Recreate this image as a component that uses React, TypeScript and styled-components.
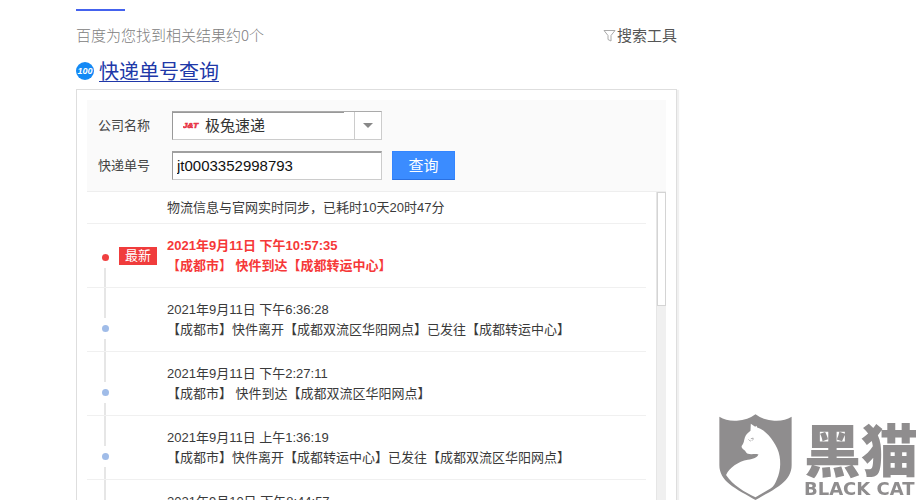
import React from "react";
import styled, { createGlobalStyle } from "styled-components";

const sans = `"Liberation Sans", "Noto Sans CJK SC", sans-serif`;
const cjk = `"Noto Sans CJK SC", sans-serif`;

const GlobalStyle = createGlobalStyle`
  *, *::before, *::after { box-sizing: border-box; }
  body { margin: 0; background: #fff; color: #3a3a3a; font: 13px/20px ${sans}; }
  h1, ul, p { margin: 0; padding: 0; }
`;

const Page = styled.main`
  height: 100vh;
  overflow: hidden;
  padding: 9px 243px 0 76px;
`;

const TabIndicator = styled.div`
  width: 49px;
  height: 2px;
  background: #4462ee;
`;

const ResultBar = styled.div`
  display: flex;
  justify-content: space-between;
  align-items: center;
  height: 24px;
  margin-top: 12px;
  font: 300 15px/24px ${cjk};
  color: #808080;
`;

const ToolButton = styled.button`
  display: flex;
  align-items: center;
  gap: 1px;
  padding: 0;
  border: 0;
  background: none;
  color: #555;
  font: 400 15px/24px ${cjk};
`;

const Title = styled.h1`
  display: flex;
  align-items: center;
  gap: 5px;
  height: 28px;
  margin: 10px 0 4px;
  font: 400 20px/28px ${cjk};
`;

const TitleLink = styled.a`
  color: #2038a8;
  text-decoration: underline;
  text-decoration-thickness: 1px;
  text-underline-offset: 2px;
`;

const Card = styled.section`
  padding: 10px;
  border: 1px solid #dedede;
  box-shadow: 2px 1px 1px #f0f0f0;
`;

const QueryForm = styled.form`
  display: flex;
  flex-direction: column;
  gap: 11px;
  padding: 11px;
  border-bottom: 1px solid #eee;
  background: #fafafa;
`;

const FieldRow = styled.div`
  display: flex;
  align-items: center;
  height: 29px;
`;

const Label = styled.label`
  width: 74px;
  color: #444;
`;

const SelectBox = styled.div`
  position: relative;
  width: 210px;
  height: 29px;
  border: 1px solid #ccc;
  border-top-color: #aaa;
  border-left-color: #999;
  background: #fff;
`;

const CompanySelect = styled.select`
  appearance: none;
  display: block;
  width: 171px;
  height: 27px;
  padding: 0 0 2px 32px;
  border: 0;
  border-top: 1px solid #999;
  border-radius: 0;
  background: transparent;
  color: #333;
  font: 400 15px/24px ${cjk};
`;

const CarrierLogo = styled.svg`
  position: absolute;
  left: 10px;
  top: 8px;
`;

const SelectArrow = styled.span`
  position: absolute;
  right: 0;
  top: 0;
  bottom: 0;
  display: grid;
  place-items: center;
  width: 27px;
  border-left: 1px solid #ccc;
  pointer-events: none;
`;

const NumberInput = styled.input`
  width: 210px;
  height: 29px;
  padding: 0 4px 2px;
  border: 1px solid #ccc;
  border-top: 2px solid #a0a0a0;
  border-left-color: #999;
  border-radius: 0;
  background: #fff;
  color: #111;
  font: 15px/24px ${sans};
`;

const SubmitButton = styled.button`
  width: 63px;
  height: 29px;
  margin-left: 10px;
  padding: 0 0 2px;
  border: 1px solid #3385ff;
  border-bottom-color: #2a70e0;
  background: #3b8cff;
  color: #fff;
  font: 400 15px/24px ${cjk};
`;

const TrackArea = styled.div`
  display: flex;
  gap: 10px;
`;

const TrackContent = styled.div`
  flex: 1;
  min-width: 0;
`;

const Summary = styled.p`
  height: 32px;
  padding-left: 80px;
  border-bottom: 1px solid #f0f0f0;
  line-height: 32px;
`;

const TrackList = styled.ul`
  list-style: none;
`;

const TrackItem = styled.li<{ $latest?: boolean }>`
  display: grid;
  grid-template-columns: 8px 38px 1fr;
  height: 64px;
  padding-left: 14px;
  border-bottom: 1px solid #f0f0f0;
  color: ${(p) => (p.$latest ? "#f63838" : "#3a3a3a")};
  font-weight: ${(p) => (p.$latest ? 700 : 400)};
  column-gap: 10px;
`;

const Rail = styled.div`
  display: flex;
  flex-direction: column;
  align-items: center;
`;

const RailTop = styled.span<{ $latest?: boolean }>`
  width: 2px;
  height: ${(p) => (p.$latest ? 23 : 30)}px;
  background: ${(p) => (p.$latest ? "transparent" : "#e6e6e6")};
`;

const RailBottom = styled.span`
  flex: 1;
  width: 2px;
  background: #e6e6e6;
`;

const Dot = styled.span<{ $latest?: boolean }>`
  width: 7px;
  height: 7px;
  margin: 7px 0;
  border-radius: 50%;
  background: ${(p) => (p.$latest ? "#f04040" : "#a0bce8")};
`;

const Badge = styled.span`
  height: 18px;
  margin-top: 23px;
  background: #f03c3c;
  color: #fff;
  font-weight: 400;
  line-height: 18px;
  text-align: center;
`;

const TrackText = styled.div`
  grid-column: 3;
  padding-top: 12px;
  white-space: nowrap;
`;

const ScrollTrack = styled.div`
  width: 10px;
  border-left: 1px solid #e6e6e6;
  background: #f0f0f0;
`;

const ScrollThumb = styled.div`
  height: 114px;
  border: 1px solid #d4d4d4;
  background: #fff;
`;

const Watermark = styled.aside`
  position: fixed;
  right: 2px;
  bottom: 0;
  display: flex;
  align-items: flex-end;
  gap: 12px;
  color: #8f8d8e;
`;

const Wordmark = styled.div`
  display: flex;
  flex-direction: column;
  width: 114px;
`;

const ChineseName = styled.span`
  font: 900 57px/62px ${cjk};
  white-space: nowrap;
`;

const EnglishName = styled.span`
  font: 700 18px/22px "DejaVu Sans", sans-serif;
  white-space: nowrap;
`;

const entries = [
  { time: "2021年9月11日 下午10:57:35", text: "【成都市】 快件到达【成都转运中心】", latest: true },
  { time: "2021年9月11日 下午6:36:28", text: "【成都市】快件离开【成都双流区华阳网点】已发往【成都转运中心】" },
  { time: "2021年9月11日 下午2:27:11", text: "【成都市】 快件到达【成都双流区华阳网点】" },
  { time: "2021年9月11日 上午1:36:19", text: "【成都市】快件离开【成都转运中心】已发往【成都双流区华阳网点】" },
  { time: "2021年9月10日 下午8:44:57", text: "" },
];

function CatShield() {
  return (
    <svg width="73" height="86" viewBox="29 27 218 257" aria-hidden="true">
      <path
        fill="currentColor"
        d="M30 35Q52 49 82 47Q116 45 138 28Q160 45 194 47Q224 49 246 35V180C246 202 235 221 216 236C194 254 163 269 138 284C113 269 82 254 60 236C41 221 30 202 30 180Z"
      />
      <path
        fill="#fff"
        d="M124 56L137 65L141 62L143 67C169 75 190 102 203 130C216 160 214 197 202 222C197 235 192 243 184 249L138 276C105 260 71 240 50 209C60 188 86 169 115 164C132 161 143 157 147 148C137 145 123 149 113 145C108 142 110 138 103 134C98 130 95 126 97 122C104 113 103 108 106 98C109 89 114 84 123 77Z"
      />
      <path fill="none" stroke="currentColor" strokeWidth="2" d="M117 103Q120 107 124 108M124 101L131 99Q132 104 127 107" />
    </svg>
  );
}

export default function App() {
  return (
    <>
      <GlobalStyle />
      <Page>
        <TabIndicator />
        <ResultBar>
          <span>百度为您找到相关结果约0个</span>
          <ToolButton type="button">
            <svg width="13" height="13" viewBox="0 0 13 13" fill="none" stroke="#aaa" aria-hidden="true">
              <path d="M1 1.5H12L8 6.5V12M1 1.5L5 6.5V10.5L8 12" />
            </svg>
            搜索工具
          </ToolButton>
        </ResultBar>
        <Title>
          <svg width="18" height="18" viewBox="0 0 18 18" aria-hidden="true">
            <circle cx="9" cy="9" r="9" fill="#1489f5" />
            <text x="9" y="12" textAnchor="middle" fill="#fff" fontFamily="Liberation Sans" fontSize="9" fontWeight="700" fontStyle="italic">100</text>
          </svg>
          <TitleLink href="#">快递单号查询</TitleLink>
        </Title>
        <Card>
          <QueryForm onSubmit={(e) => e.preventDefault()}>
            <FieldRow>
              <Label htmlFor="company">公司名称</Label>
              <SelectBox>
                <CompanySelect id="company">
                  <option>极兔速递</option>
                </CompanySelect>
                <CarrierLogo width="17" height="10" viewBox="0 0 17 10" aria-hidden="true">
                  <text x="0" y="8" fill="#e83345" stroke="#e83345" strokeWidth="0.6" fontFamily="Liberation Sans" fontSize="8" fontWeight="700" fontStyle="italic">J&amp;T</text>
                </CarrierLogo>
                <SelectArrow>
                  <svg width="10" height="5" viewBox="0 0 10 5" aria-hidden="true">
                    <path d="M0 0H10L5 5Z" fill="#888" />
                  </svg>
                </SelectArrow>
              </SelectBox>
            </FieldRow>
            <FieldRow>
              <Label htmlFor="number">快递单号</Label>
              <NumberInput id="number" type="text" defaultValue="jt0003352998793" />
              <SubmitButton type="submit">查询</SubmitButton>
            </FieldRow>
          </QueryForm>
          <TrackArea>
            <TrackContent>
              <Summary>物流信息与官网实时同步，已耗时10天20时47分</Summary>
              <TrackList>
                {entries.map((entry) => (
                  <TrackItem key={entry.time} $latest={entry.latest}>
                    <Rail>
                      <RailTop $latest={entry.latest} />
                      <Dot $latest={entry.latest} />
                      <RailBottom />
                    </Rail>
                    {entry.latest && <Badge>最新</Badge>}
                    <TrackText>
                      <p>{entry.time}</p>
                      <p>{entry.text}</p>
                    </TrackText>
                  </TrackItem>
                ))}
              </TrackList>
            </TrackContent>
            <ScrollTrack>
              <ScrollThumb />
            </ScrollTrack>
          </TrackArea>
        </Card>
      </Page>
      <Watermark>
        <CatShield />
        <Wordmark>
          <ChineseName>黑猫</ChineseName>
          <EnglishName>BLACK CAT</EnglishName>
        </Wordmark>
      </Watermark>
    </>
  );
}
